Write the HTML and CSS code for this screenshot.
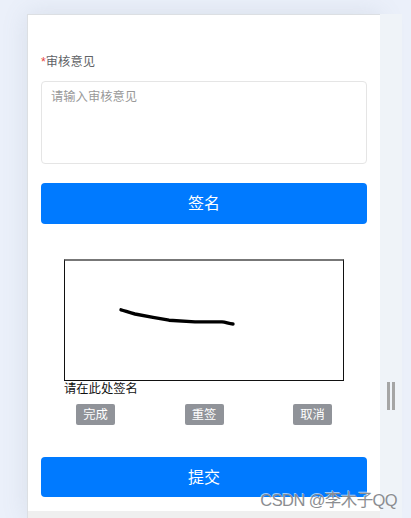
FILE: index.html
```html
<!DOCTYPE html>
<html lang="zh-CN">
<head>
  <meta charset="UTF-8">
  <meta name="viewport" content="width=device-width, initial-scale=1.0">
  <title>审核</title>
  <link rel="stylesheet" href="styles.css">
</head>
<body>
  <div class="device">
    <div class="screen">
      <form class="form">
        <label class="label" for="opinion"><span class="required">*</span>审核意见</label>
        <textarea id="opinion" class="opinion" placeholder="请输入审核意见"></textarea>
        <button type="button" class="btn">签名</button>

        <div class="sign">
          <svg class="sign-board" viewBox="0 0 278 119">
            <path d="M56 48.800 C60 49.800 64 51.600 70 53 L88 56.400 L104 59.200 L130 60.900 H157 C161 61.200 164 62.900 168 63" />
          </svg>
          <p class="sign-tip">请在此处签名</p>
          <div class="sign-actions">
            <button type="button" class="btn-small">完成</button>
            <button type="button" class="btn-small">重签</button>
            <button type="button" class="btn-small">取消</button>
          </div>
        </div>

        <button type="button" class="btn">提交</button>
      </form>
    </div>
    <div class="resizer"><i></i><i></i></div>
  </div>
  <div class="watermark">CSDN @李木子QQ</div>
</body>
</html>
```

FILE: styles.css
```css
* {
  margin: 0;
  padding: 0;
  box-sizing: border-box;
}

body {
  height: 518px;
  padding: 14px 9px 0 27px;
  overflow: hidden;
  background: #ebf0fa;
  font-family: "Liberation Sans", "Noto Sans CJK SC", sans-serif;
}

button,
textarea {
  font-family: inherit;
}

.device {
  display: flex;
  height: 504px;
}

.screen {
  width: 353px;
  border-top: 1px solid #dcdfe3;
  border-left: 1px solid #dcdfe3;
  background: #efefef;
  box-shadow: 0 0 24px rgba(110, 130, 150, 0.16);
}

.form {
  display: flex;
  flex-direction: column;
  height: 496px;
  padding: 38px 13px 0;
  background: #fff;
}

.label {
  height: 18px;
  line-height: 18px;
  font-size: 12.3px;
  color: #606266;
}

.required {
  color: #e64340;
}

.opinion {
  height: 83px;
  margin-top: 10px;
  padding: 6px 9px;
  border: 1px solid #e5e5e5;
  border-radius: 4px;
  font-size: 12.3px;
  line-height: 18px;
  resize: none;
}

.opinion::placeholder {
  color: #999;
}

.btn {
  flex: none;
  height: 40.67px;
  margin-top: 19px;
  border: none;
  border-radius: 4px;
  background: #007aff;
  color: #fff;
  font-size: 16px;
  line-height: 41px;
}

.sign {
  height: 214px;
  padding: 35.33px 23px 0;
}

.sign-board {
  display: block;
  width: 280px;
  height: 122px;
  border: 1px solid #111;
  border-top: 2px solid #777;
}

.sign-board path {
  fill: none;
  stroke: #000;
  stroke-width: 3.4;
  stroke-linecap: round;
  stroke-linejoin: round;
}

.sign-tip {
  height: 16px;
  line-height: 17px;
  font-size: 12.3px;
  color: #111;
}

.sign-actions {
  display: flex;
  justify-content: space-between;
  padding: 7px 12px 0;
}

.btn-small {
  width: 39px;
  height: 21px;
  padding-top: 1px;
  border: none;
  border-radius: 2px;
  background: #909399;
  color: #fff;
  font-size: 12.3px;
  line-height: 20px;
}

.resizer {
  display: flex;
  justify-content: center;
  align-items: flex-start;
  gap: 2px;
  width: 22px;
  padding-top: 368px;
  background: #eff3f8;
}

.resizer i {
  width: 3px;
  height: 28px;
  background: #a5a5a5;
}

/* sits over the page corner */
.watermark {
  position: absolute;
  right: 14px;
  bottom: 7px;
  font-size: 16.5px;
  line-height: 22px;
  letter-spacing: -0.6px;
  color: #8b8d91;
  text-shadow: -1px -1px 0 rgba(255, 255, 255, 0.6);
  white-space: nowrap;
}
```
